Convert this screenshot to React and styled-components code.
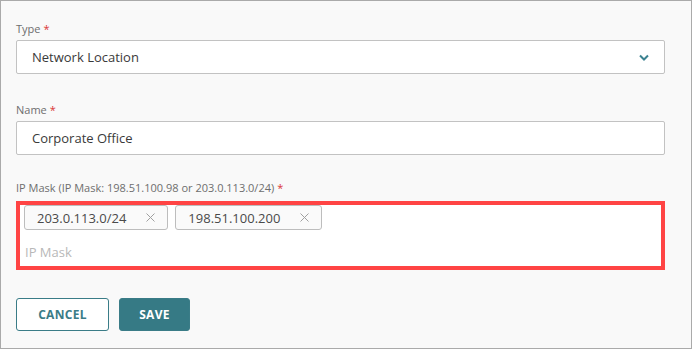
import React from "react";
import styled, { createGlobalStyle } from "styled-components";

const Global = createGlobalStyle`
  html, body { margin: 0; padding: 0; background: #f9f9f9; }
  body { font-family: "Open Sans", "Liberation Sans", sans-serif; }
  * { box-sizing: border-box; }
`;

const Panel = styled.div`
  width: 692px;
  height: 349px;
  border: 1px solid #aaaaaa;
  background: #f9f9f9;
  padding: 20px 26px 0 15px;
  display: flex;
  flex-direction: column;
`;

const Field = styled.div`
  display: flex;
  flex-direction: column;
  margin-bottom: ${(p) => p.$mb}px;
`;

const Label = styled.div`
  font-size: 11px;
  line-height: 16px;
  color: #6e6e6e;
  margin-bottom: ${(p) => p.$gap ?? 3}px;
`;

const Req = styled.span`
  color: #d93636;
  margin-left: 3px;
`;

const Box = styled.div`
  height: 34px;
  border: 1px solid #c2c2c2;
  border-radius: 2px;
  background: #ffffff;
  display: flex;
  align-items: center;
  padding: 0 15px 0 15px;
  font-size: 13px;
  color: #3a3a3a;
`;

const Value = styled.span`
  flex: 1;
`;

const TagBox = styled.div`
  height: 69px;
  border: 4px solid #ff4444;
  background: #ffffff;
  padding: 0 4px 2px 4px;
  display: flex;
  flex-direction: column;
`;

const ChipRow = styled.div`
  display: flex;
  gap: 7px;
`;

const Chip = styled.div`
  height: 25px;
  border: 1px solid #bdbdbd;
  border-radius: 3px;
  background: #fafafa;
  display: flex;
  align-items: center;
  padding: 0 12px 0 12px;
  font-size: 13px;
  color: #4a4a4a;
  gap: 20px;
`;

const Placeholder = styled.div`
  height: 24px;
  margin-top: 10px;
  margin-left: 1px;
  font-size: 13px;
  line-height: 24px;
  color: #b8b8b8;
`;

const Actions = styled.div`
  display: flex;
  gap: 10px;
`;

const Button = styled.button`
  height: 33px;
  border-radius: 3px;
  font-family: "Open Sans", "Liberation Sans", sans-serif;
  font-weight: 700;
  font-size: 12px;
  letter-spacing: 0.3px;
  padding: 0;
  border: 1px solid #3a7c87;
  background: ${(p) => (p.$primary ? "#367a85" : "#ffffff")};
  color: ${(p) => (p.$primary ? "#ffffff" : "#3a7c87")};
  width: ${(p) => p.$w}px;
`;

const Chevron = () => (
  <svg width="10" height="7" viewBox="0 0 10 7">
    <polyline points="1,1.5 5,5.5 9,1.5" fill="none" stroke="#3b8290" strokeWidth="2" />
  </svg>
);

const XIcon = () => (
  <svg width="9" height="9" viewBox="0 0 9 9">
    <path d="M0.5 0.5 L8.5 8.5 M8.5 0.5 L0.5 8.5" stroke="#a0a0a0" strokeWidth="1" />
  </svg>
);

export default function App() {
  return (
    <>
      <Global />
      <Panel>
        <Field $mb={28}>
          <Label>
            Type<Req>*</Req>
          </Label>
          <Box>
            <Value>Network Location</Value>
            <Chevron />
          </Box>
        </Field>
        <Field $mb={25}>
          <Label>
            Name<Req>*</Req>
          </Label>
          <Box>
            <Value>Corporate Office</Value>
          </Box>
        </Field>
        <Field $mb={28}>
          <Label $gap={5}>
            IP Mask (IP Mask: 198.51.100.98 or 203.0.113.0/24)<Req>*</Req>
          </Label>
          <TagBox>
            <ChipRow>
              <Chip>
                203.0.113.0/24
                <XIcon />
              </Chip>
              <Chip>
                198.51.100.200
                <XIcon />
              </Chip>
            </ChipRow>
            <Placeholder>IP Mask</Placeholder>
          </TagBox>
        </Field>
        <Actions>
          <Button $w={93}>CANCEL</Button>
          <Button $primary $w={71}>SAVE</Button>
        </Actions>
      </Panel>
    </>
  );
}
